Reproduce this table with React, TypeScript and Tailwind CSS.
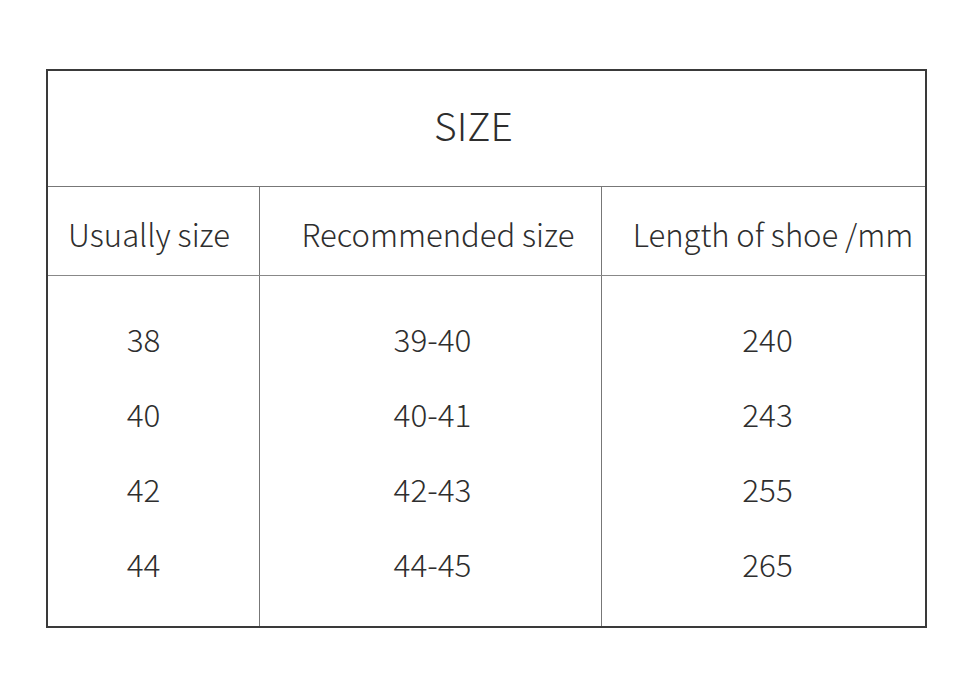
import React from "react";

const rows = [
  ["38", "39-40", "240"],
  ["40", "40-41", "243"],
  ["42", "42-43", "255"],
  ["44", "44-45", "265"],
];

export default function App() {
  return (
    <div
      className="w-[968px] h-[692px] bg-white pt-[69px] pl-[46px] text-[#2e2e2e] font-light"
      style={{ fontFamily: '"Noto Sans CJK SC", "Noto Sans", sans-serif' }}
    >
      <div className="w-[881px] h-[559px] border-2 border-[#3a3a3a] flex flex-col">
        <div className="h-[117px] border-b border-[#777] flex items-center justify-center pr-[26px] pb-[8px]">
          <span className="text-[39px] leading-none">SIZE</span>
        </div>
        <div className="grid grid-cols-[212px_342px_1fr] h-[89px] border-b border-[#888] text-[31px]">
          <div className="border-r border-[#777] flex items-center justify-center pr-[9px] pt-[6px]">
            Usually size
          </div>
          <div className="border-r border-[#777] flex items-center justify-center pl-[15px] pt-[6px]">
            Recommended size
          </div>
          <div className="flex items-center justify-center pl-[19px] pt-[6px]">
            Length of shoe /mm
          </div>
        </div>
        <div className="grid grid-cols-[212px_342px_1fr] flex-1 text-[31.5px]">
          <div className="border-r border-[#777] flex flex-col py-[25px] pr-[20px]">
            {rows.map((r) => (
              <div key={r[0]} className="h-[75px] flex items-center justify-center">
                {r[0]}
              </div>
            ))}
          </div>
          <div className="border-r border-[#777] flex flex-col py-[25px] pl-[4px]">
            {rows.map((r) => (
              <div key={r[1]} className="h-[75px] flex items-center justify-center">
                {r[1]}
              </div>
            ))}
          </div>
          <div className="flex flex-col py-[25px] pl-[8px]">
            {rows.map((r) => (
              <div key={r[2]} className="h-[75px] flex items-center justify-center">
                {r[2]}
              </div>
            ))}
          </div>
        </div>
      </div>
    </div>
  );
}
